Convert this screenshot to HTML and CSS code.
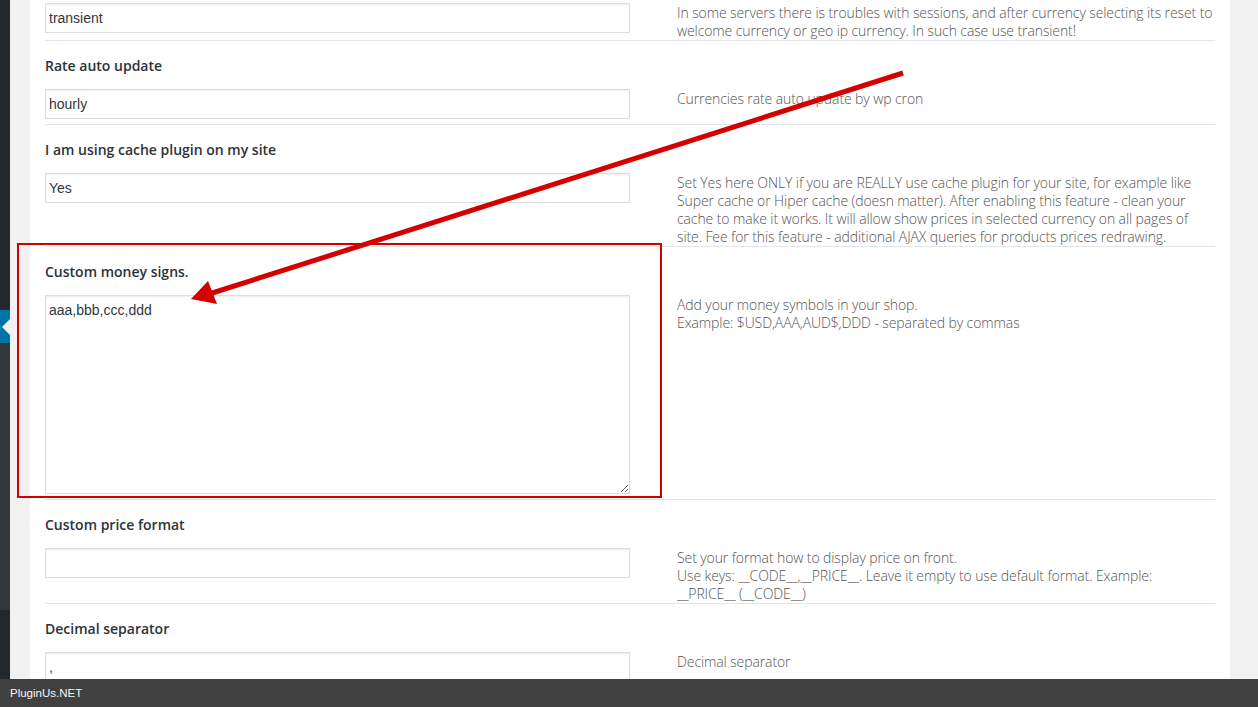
FILE: index.html
```html
<!DOCTYPE html>
<html lang="en">
<head>
  <meta charset="UTF-8">
  <meta name="viewport" content="width=device-width, initial-scale=1.0">
  <title>Currency options</title>
  <link rel="stylesheet" href="styles.css">
</head>
<body>
  <div id="adminmenu">
    <div class="menu-top"></div>
    <div class="menu-current"><span class="menu-arrow"></span></div>
    <div class="menu-sub"></div>
    <div class="menu-rest"></div>
  </div>

  <div id="wpbody">
    <div id="options">

      <div class="row first">
        <div class="row-body">
          <div class="field"><input type="text" class="text-input" value="transient" readonly></div>
          <div class="desc">In some servers there is troubles with sessions, and after currency selecting its reset to welcome currency or geo ip currency. In such case use transient!</div>
        </div>
      </div>

      <div class="row">
        <div class="row-title">Rate auto update</div>
        <div class="row-body">
          <div class="field"><input type="text" class="text-input" value="hourly" readonly></div>
          <div class="desc">Currencies rate auto update by wp cron</div>
        </div>
      </div>

      <div class="row">
        <div class="row-title">I am using cache plugin on my site</div>
        <div class="row-body">
          <div class="field"><input type="text" class="text-input" value="Yes" readonly></div>
          <div class="desc">Set Yes here ONLY if you are REALLY use cache plugin for your site, for example like Super cache or Hiper cache (doesn matter). After enabling this feature - clean your cache to make it works. It will allow show prices in selected currency on all pages of site. Fee for this feature - additional AJAX queries for products prices redrawing.</div>
        </div>
      </div>

      <div class="row">
        <div class="row-title">Custom money signs.</div>
        <div class="row-body">
          <div class="field"><textarea class="text-area">aaa,bbb,ccc,ddd</textarea></div>
          <div class="desc">Add your money symbols in your shop.<br>Example: $USD,AAA,AUD$,DDD - separated by commas</div>
        </div>
      </div>

      <div class="row">
        <div class="row-title">Custom price format</div>
        <div class="row-body">
          <div class="field"><input type="text" class="text-input" value="" readonly></div>
          <div class="desc">Set your format how to display price on front.<br>Use keys: __CODE__,__PRICE__. Leave it empty to use default format. Example: __PRICE__&nbsp;(__CODE__)</div>
        </div>
      </div>

      <div class="row">
        <div class="row-title">Decimal separator</div>
        <div class="row-body">
          <div class="field"><input type="text" class="text-input" value="," readonly></div>
          <div class="desc">Decimal separator</div>
        </div>
      </div>

    </div>
  </div>

  <!-- screenshot annotation -->
  <div class="mark-box"></div>
  <svg class="mark-arrow" width="1258" height="707" viewBox="0 0 1258 707">
    <line x1="903" y1="73" x2="209" y2="294" stroke="#d40000" stroke-width="5"/>
    <polygon points="191,299 217,304 208,281" fill="#d40000"/>
  </svg>

  <div class="watermark">PluginUs.NET</div>
</body>
</html>
```

FILE: styles.css
```css
html, body {
  height: 100%;
}

body {
  display: flex;
  margin: 0;
  overflow: hidden;
  background-color: #f1f1f1;
  font-family: 'Open Sans', sans-serif;
  color: #23282d;
}

/* left admin menu, only its edge is visible */
#adminmenu {
  display: flex;
  flex-direction: column;
  width: 10px;
  flex-shrink: 0;
}

.menu-top {
  height: 310px;
  background-color: #23282d;
}

.menu-current {
  display: flex;
  align-items: center;
  justify-content: flex-end;
  height: 33px;
  background-color: #0073aa;
}

.menu-arrow {
  width: 0;
  height: 0;
  border-top: 8px solid transparent;
  border-bottom: 8px solid transparent;
  border-right: 8px solid #f1f1f1;
}

.menu-sub {
  height: 267px;
  background-color: #32373c;
}

.menu-rest {
  flex: 1;
  background-color: #23282d;
}

#wpbody {
  padding-left: 20px;
}

#options {
  width: 1170px;
  min-height: 100%;
  padding: 0 15px;
  background-color: #fff;
}

.row {
  padding-top: 15px;
  border-bottom: 1px solid #e2e6e9;
}

.row.first {
  padding-top: 3px;
}

.row-title {
  margin-bottom: 13px;
  font-size: 14px;
  font-weight: 600;
  line-height: 20px;
  color: #2c3338;
}

.row-body {
  display: flex;
  align-items: flex-start;
  gap: 47px;
}

.field {
  width: 585px;
  flex-shrink: 0;
  padding-bottom: 5px;
}

.text-input,
.text-area {
  display: block;
  box-sizing: border-box;
  width: 100%;
  margin: 0;
  border: 1px solid #ddd;
  border-radius: 0;
  box-shadow: inset 0 1px 2px rgba(0, 0, 0, 0.07);
  background-color: #fff;
  font-family: 'Liberation Sans', Arial, sans-serif;
  font-size: 14px;
  color: #32373c;
  outline: none;
}

.text-input {
  height: 30px;
  padding: 0 3px;
}

.text-area {
  height: 199px;
  padding: 4px 3px;
  line-height: 20px;
}

.desc {
  width: 540px;
  padding-top: 1px;
  font-size: 14px;
  font-weight: 300;
  line-height: 18px;
  letter-spacing: -0.1px;
  color: #555;
}

.mark-box {
  position: absolute;
  left: 17px;
  top: 243px;
  width: 641px;
  height: 251px;
  border: 2px solid #d40000;
}

.mark-arrow {
  position: absolute;
  left: 0;
  top: 0;
  pointer-events: none;
}

.watermark {
  position: fixed;
  left: 0;
  right: 0;
  bottom: 0;
  height: 28px;
  padding-left: 10px;
  background-color: #404040;
  font-family: 'Liberation Sans', Arial, sans-serif;
  font-size: 11.5px;
  line-height: 28px;
  color: #f5f5f5;
}
```
